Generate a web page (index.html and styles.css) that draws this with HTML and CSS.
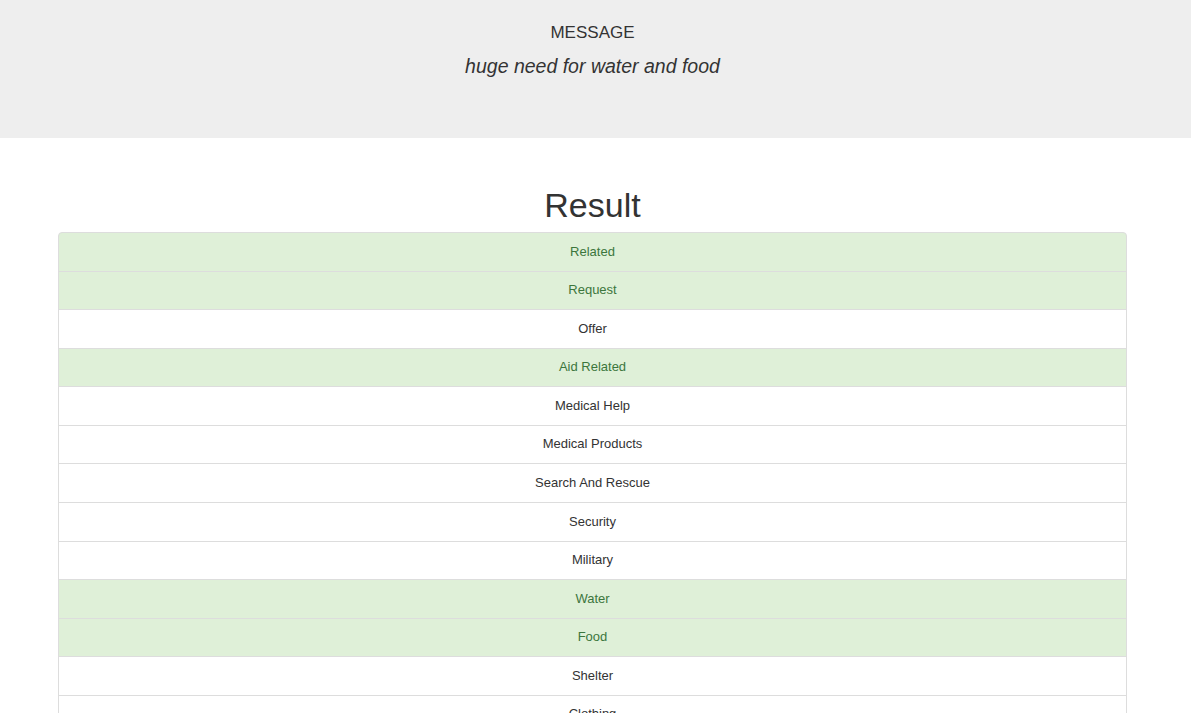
FILE: index.html
```html
<!DOCTYPE html>
<html>
<head>
<meta charset="utf-8">
<title>Result</title>
<link rel="stylesheet" href="styles.css">
</head>
<body>
<div class="page">
  <header class="jumbotron">
    <div class="msg-label">MESSAGE</div>
    <div class="msg-text">huge need for water and food</div>
  </header>
  <main class="container">
    <h1 class="title">Result</h1>
    <ul class="list-group">
      <li class="item success">Related</li>
      <li class="item success">Request</li>
      <li class="item">Offer</li>
      <li class="item success">Aid Related</li>
      <li class="item">Medical Help</li>
      <li class="item">Medical Products</li>
      <li class="item">Search And Rescue</li>
      <li class="item">Security</li>
      <li class="item">Military</li>
      <li class="item success">Water</li>
      <li class="item success">Food</li>
      <li class="item">Shelter</li>
      <li class="item">Clothing</li>
      <li class="item">Money</li>
      <li class="item">Missing People</li>
      <li class="item">Refugees</li>
    </ul>
  </main>
</div>
</body>
</html>
```
FILE: styles.css
```css
html, body {
  margin: 0;
  padding: 0;
  background: #fff;
}
body {
  font-family: "Liberation Sans", Arial, sans-serif;
  color: #333;
  font-size: 13px;
}
.jumbotron {
  background: #eee;
  height: 138px;
  box-sizing: border-box;
  padding: 23px 6px 0 0;
  text-align: center;
}
.msg-label {
  font-size: 17px;
  line-height: 20px;
  color: #333;
}
.msg-text {
  font-size: 19.5px;
  line-height: 24px;
  font-style: italic;
  margin-top: 11px;
}
.container {
  margin: 0 64px 0 58px;
}
.title {
  font-size: 34px;
  font-weight: 500;
  line-height: 40px;
  margin: 47px 0 7px;
  text-align: center;
  color: #333;
}
.list-group {
  list-style: none;
  margin: 0;
  padding: 0;
}
.item {
  padding: 9.5px 15px;
  line-height: 18.58px;
  border: 1px solid #ddd;
  margin-bottom: -1px;
  background: #fff;
  text-align: center;
  font-size: 13px;
}
.item:first-child {
  border-top-left-radius: 4px;
  border-top-right-radius: 4px;
}
.item.success {
  background: #dff0d8;
  color: #3c763d;
}
```
